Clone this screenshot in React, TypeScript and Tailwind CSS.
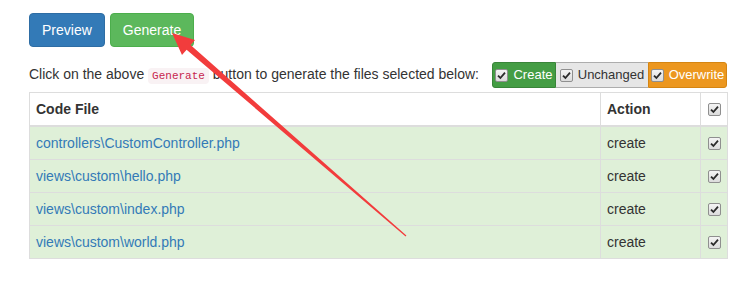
import React from 'react'

function Check() {
  return (
    <span className="inline-flex h-[13px] w-[13px] shrink-0 items-center justify-center rounded-[2px] border border-[#8f8f8f] bg-gradient-to-b from-[#f4f4f4] to-[#dcdcdc]">
      <svg width="9" height="9" viewBox="0 0 9 9">
        <path d="M1 4.6 L3.4 7 L8 1.6" fill="none" stroke="#2b2b2b" strokeWidth="1.8" />
      </svg>
    </span>
  )
}

const rows = [
  'controllers\\CustomController.php',
  'views\\custom\\hello.php',
  'views\\custom\\index.php',
  'views\\custom\\world.php',
]

export default function App() {
  return (
    <div className="relative min-h-[288px] w-[745px] bg-white font-['Liberation_Sans',Arial,sans-serif] text-[14px] leading-5 text-[#333]">
      <div className="w-[698px] ml-[29px] pt-[13px]">
        {/* buttons */}
        <div className="flex gap-[5px]">
          <button className="h-[34px] rounded-[4px] border border-[#2e6da4] bg-[#337ab7] px-3 text-white">
            Preview
          </button>
          <button className="h-[34px] rounded-[4px] border border-[#4cae4c] bg-[#5cb85c] px-3 text-white">
            Generate
          </button>
        </div>

        {/* hint + legend */}
        <div className="mt-[15px] flex items-center justify-between whitespace-nowrap">
          <span>
            Click on the above{' '}
            <code className="rounded-[4px] bg-[#f9f2f4] px-1 py-[2px] font-['Liberation_Mono',monospace] text-[11px] text-[#c7254e]">
              Generate
            </code>{' '}
            button to generate the files selected below:
          </span>
          <div className="flex h-[26px] shrink-0 text-[13px]">
            <span className="flex w-[64px] items-center justify-center gap-[5px] rounded-l-[3px] border border-[#398439] bg-[#449d44] text-white">
              <Check />
              Create
            </span>
            <span className="flex w-[92px] items-center justify-center gap-[5px] border-y border-[#adadad] bg-[#e6e6e6] text-[#333]">
              <Check />
              Unchanged
            </span>
            <span className="flex w-[79px] items-center justify-center gap-[5px] rounded-r-[3px] border border-[#d58512] bg-[#ec971f] text-white">
              <Check />
              Overwrite
            </span>
          </div>
        </div>

        {/* table */}
        <table className="mt-[4px] w-[698px] table-fixed border-collapse border border-[#ddd]">
          <colgroup>
            <col className="w-[571px]" />
            <col className="w-[100px]" />
            <col className="w-[27px]" />
          </colgroup>
          <thead>
            <tr className="border-b-2 border-[#ddd]">
              <th className="px-[6px] py-[6px] text-left font-bold">Code File</th>
              <th className="border-l border-[#ddd] px-[6px] py-[6px] text-left font-bold">Action</th>
              <th className="border-l border-[#ddd] py-[6px]">
                <div className="flex justify-center">
                  <Check />
                </div>
              </th>
            </tr>
          </thead>
          <tbody>
            {rows.map((r) => (
              <tr key={r} className="border-t border-[#ddd] bg-[#dff0d8]">
                <td className="px-[6px] py-[6px] text-[#337ab7]">{r}</td>
                <td className="border-l border-[#ddd] px-[6px] py-[6px]">create</td>
                <td className="border-l border-[#ddd] py-[6px]">
                  <div className="flex justify-center">
                    <Check />
                  </div>
                </td>
              </tr>
            ))}
          </tbody>
        </table>
      </div>

      {/* annotation arrow */}
      <svg className="pointer-events-none absolute left-0 top-0" width="745" height="288">
        <polygon
          points="172,33 195,40 190.6,45.1 406.4,235.6 405.6,236.4 186.6,49.7 182,55"
          fill="#f23c3c"
        />
      </svg>
    </div>
  )
}
